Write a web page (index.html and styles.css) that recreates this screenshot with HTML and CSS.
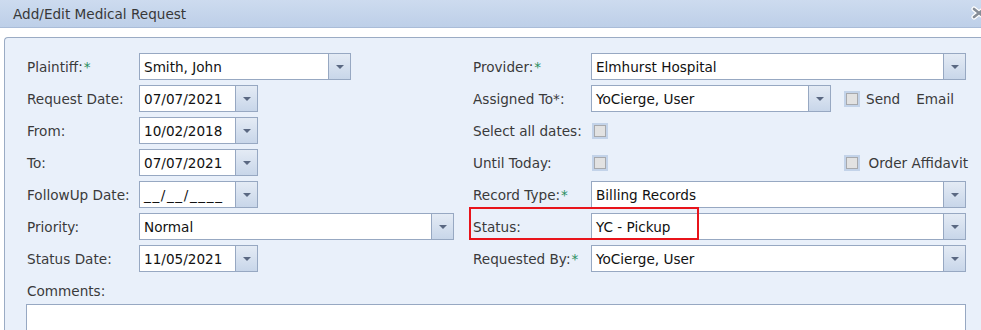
FILE: index.html
```html
<!DOCTYPE html>
<html lang="en">
<head>
    <meta charset="UTF-8">
    <meta name="viewport" content="width=device-width, initial-scale=1.0">
    <title>Add/Edit Medical Request</title>
    <link rel="stylesheet" href="styles.css">
</head>
<body>
    <div class="dialog">
        <div class="titlebar">
            <span class="title">Add/Edit Medical Request</span>
            <svg class="close" width="16" height="14" viewBox="0 0 16 14">
                <path d="M3 3 L13 11 M13 3 L3 11" stroke="#fff" stroke-width="5" stroke-linecap="round"/>
                <path d="M3 3 L13 11 M13 3 L3 11" stroke="#868d97" stroke-width="2.6" stroke-linecap="round"/>
            </svg>
        </div>
        <div class="content">
            <div class="panel">
                <div class="form-grid">
                    <!-- row 1 -->
                    <label class="lbl">Plaintiff:<span class="req">*</span></label>
                    <div class="field combo w-plaintiff"><span class="val">Smith, John</span><span class="btn"></span></div>
                    <label class="lbl">Provider:<span class="req">*</span></label>
                    <div class="field combo w-right"><span class="val">Elmhurst Hospital</span><span class="btn"></span></div>

                    <!-- row 2 -->
                    <label class="lbl">Request Date:</label>
                    <div class="field combo w-date"><span class="val">07/07/2021</span><span class="btn"></span></div>
                    <label class="lbl">Assigned To*:</label>
                    <div class="cell">
                        <div class="field combo w-assigned"><span class="val">YoCierge, User</span><span class="btn"></span></div>
                        <span class="check send-check"></span>
                        <span class="check-text">Send</span>
                        <span class="check-text email">Email</span>
                    </div>

                    <!-- row 3 -->
                    <label class="lbl">From:</label>
                    <div class="field combo w-date"><span class="val">10/02/2018</span><span class="btn"></span></div>
                    <label class="lbl">Select all dates:</label>
                    <div class="cell"><span class="check"></span></div>

                    <!-- row 4 -->
                    <label class="lbl">To:</label>
                    <div class="field combo w-date"><span class="val">07/07/2021</span><span class="btn"></span></div>
                    <label class="lbl">Until Today:</label>
                    <div class="cell spread">
                        <span class="check"></span>
                        <span class="affidavit"><span class="check"></span><span class="check-text">Order Affidavit</span></span>
                    </div>

                    <!-- row 5 -->
                    <label class="lbl">FollowUp Date:</label>
                    <div class="field combo w-date"><span class="val mask">__/__/____</span><span class="btn"></span></div>
                    <label class="lbl">Record Type:<span class="req">*</span></label>
                    <div class="field combo w-right"><span class="val">Billing Records</span><span class="btn"></span></div>

                    <!-- row 6 -->
                    <label class="lbl">Priority:</label>
                    <div class="field combo w-priority"><span class="val">Normal</span><span class="btn"></span></div>
                    <label class="lbl marked">Status:<span class="highlight"></span></label>
                    <div class="field combo w-right"><span class="val">YC - Pickup</span><span class="btn"></span></div>

                    <!-- row 7 -->
                    <label class="lbl">Status Date:</label>
                    <div class="field combo w-date"><span class="val">11/05/2021</span><span class="btn"></span></div>
                    <label class="lbl">Requested By:<span class="req">*</span></label>
                    <div class="field combo w-right"><span class="val">YoCierge, User</span><span class="btn"></span></div>
                </div>

                <div class="comments">
                    <label class="lbl">Comments:</label>
                    <div class="textarea"></div>
                </div>
            </div>
        </div>
    </div>
</body>
</html>
```

FILE: styles.css
```css
html, body {
    margin: 0;
    overflow: hidden;
    background-color: #fff;
}
body {
    font-family: "DejaVu Sans", Verdana, sans-serif;
    font-size: 13.6px;
    color: #3a3a3a;
}
.dialog {
    width: 990px;
    height: 330px;
    overflow: hidden;
}
.titlebar {
    height: 27px;
    display: flex;
    align-items: center;
    justify-content: space-between;
    padding: 0 3px 0 13px;
    background: linear-gradient(#cddbef, #bdcfe8);
    border-bottom: 1px solid #a9bcd8;
}
.title {
    color: #383838;
}
.close {
    display: block;
    margin-top: -1px;
}
.content {
    padding: 9px 0 0 4px;
}
.panel {
    border: 1px solid #9aabc4;
    border-right: none;
    border-bottom: none;
    border-radius: 4px 0 0 0;
    background-color: #e9f0fa;
    padding: 15px 0 0 22px;
    height: 278px;
}
.form-grid {
    display: grid;
    grid-template-columns: 112px 334px 118px 375px;
    grid-auto-rows: 27px;
    row-gap: 5px;
}
.lbl {
    display: flex;
    align-items: center;
    white-space: nowrap;
}
.req {
    color: #2a8f5f;
    margin-left: 1px;
}
.marked {
    position: relative;
}
.highlight {
    position: absolute;
    left: -4px;
    top: -6px;
    width: 230px;
    height: 33px;
    box-sizing: border-box;
    border: 2px solid #e8141b;
}
.field {
    box-sizing: border-box;
    height: 27px;
    border: 1px solid #97a8c2;
    background-color: #fff;
    display: flex;
    align-items: center;
    color: #111;
}
.val {
    flex: 1;
    padding-left: 4px;
    white-space: nowrap;
    overflow: hidden;
}
.mask {
    letter-spacing: 1.6px;
}
.btn {
    width: 21px;
    height: 100%;
    border-left: 1px solid #97a8c2;
    background: linear-gradient(#e4ebf5, #c8d6e9);
    position: relative;
}
.btn::after {
    content: "";
    position: absolute;
    left: 7px;
    top: 11px;
    border-left: 4px solid transparent;
    border-right: 4px solid transparent;
    border-top: 4px solid #5a6882;
}
.w-plaintiff { width: 212px; }
.w-date { width: 119px; }
.w-priority { width: 315px; }
.w-right { width: 375px; }
.w-assigned { width: 240px; }

.cell {
    display: flex;
    align-items: center;
}
.spread {
    justify-content: space-between;
}
.check {
    box-sizing: border-box;
    width: 16px;
    height: 16px;
    margin-left: 1px;
    border: 2px solid #c3d3e9;
    background-color: #e2e2e2;
    box-shadow: inset 0 0 0 1px #a7a9ad;
}
.send-check {
    margin-left: 13px;
}
.check-text {
    margin-left: 6px;
}
.email {
    margin-left: 16px;
}
.affidavit {
    display: flex;
    align-items: center;
    margin-right: -2px;
}
.affidavit .check {
    margin-right: 2px;
}
.comments {
    margin-top: 10px;
}
.comments .lbl {
    height: 18px;
}
.textarea {
    margin-top: 4px;
    margin-left: -1px;
    width: 940px;
    height: 30px;
    box-sizing: border-box;
    border: 1px solid #97a8c2;
    border-bottom: none;
    background-color: #fff;
}
```
